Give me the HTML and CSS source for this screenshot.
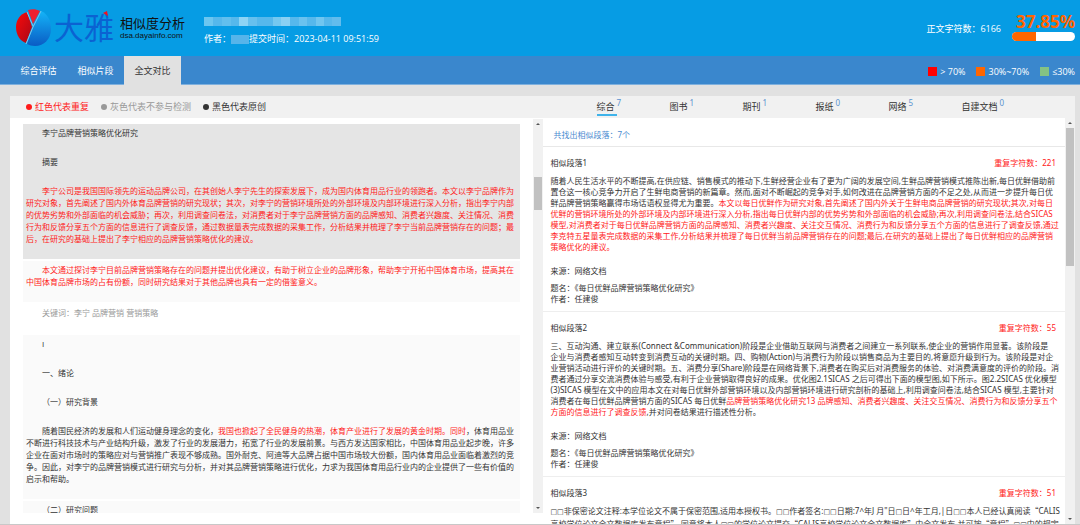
FILE: index.html
```html
<!DOCTYPE html>
<html lang="zh-CN">
<head>
  <meta charset="UTF-8">
  <title>大雅相似度分析</title>
  <link rel="stylesheet" href="styles.css">
</head>
<body>

  <header class="header">
    <div class="logo">
      <svg class="logo-pie" width="36" height="38" viewBox="0 0 36 38">
        <defs>
          <linearGradient id="blue" x1="0" y1="0" x2="0" y2="1">
            <stop offset="0" stop-color="#14b4f8"/>
            <stop offset="1" stop-color="#0a5cc4"/>
          </linearGradient>
          <linearGradient id="red" x1="0" y1="0" x2="1" y2="1">
            <stop offset="0" stop-color="#fa0a0a"/>
            <stop offset="1" stop-color="#a80818"/>
          </linearGradient>
        </defs>
        <path d="M17 18 L25 2 C32 5 35 12 35 20 C35 30 28 37 19 37 C16 37 13 36 11 35 Z" fill="url(#blue)"/>
        <path d="M16 18 L10 34 C4 32 0 26 0 18 C0 11 4 5 11 3 Z" fill="url(#red)"/>
        <path d="M17 15 L12 1 C16 0 20 0 24 2 Z" fill="#ee2030"/>
        <path d="M25 2 L17 18 L10 35 M11 3 L17 17" fill="none" stroke="#7cc8ee" stroke-width="1"/>
      </svg>
      <div class="logo-name">大雅
        <svg class="logo-mark" width="6" height="6" viewBox="0 0 6 6"><path d="M0 2 L4 0 L5 5 Z" fill="#f01020"/></svg>
      </div>
      <div class="logo-sub">
        <div class="logo-title">相似度分析</div>
        <div class="logo-url">dsa.dayainfo.com</div>
      </div>
    </div>

    <div class="paper">
      <svg class="paper-title" width="137" height="9" viewBox="0 0 137 9">
        <rect width="137" height="9" fill="#56b8ec"/>
        <rect width="9" height="9" fill="#6cc6f0"/>
        <rect x="18" width="9" height="9" fill="#62bfee"/>
        <rect x="35" width="9" height="9" fill="#8ed4f5"/>
        <rect x="44" width="9" height="9" fill="#66c0ee"/>
        <rect x="69" width="8" height="9" fill="#74c8f0"/>
        <rect x="77" width="9" height="9" fill="#8ad0f3"/>
        <rect x="95" width="8" height="9" fill="#6ac2ef"/>
        <rect x="112" width="8" height="9" fill="#70c6f0"/>
        <rect x="128" width="9" height="9" fill="#62bced"/>
      </svg>
      <div class="paper-info">
        <span>作者：</span>
        <svg width="18" height="9" viewBox="0 0 18 9"><rect width="18" height="9" fill="#56b4ea"/></svg>
        <span>提交时间：2023-04-11 09:51:59</span>
      </div>
    </div>

    <div class="total">
      <span class="total-chars">正文字符数：6166</span>
      <div class="rate">
        <div class="rate-num">37.85%</div>
        <div class="rate-bar"><div class="rate-fill" style="width: 37.85%"></div></div>
      </div>
    </div>
  </header>

  <nav class="nav">
    <a class="nav-link" href="#">综合评估</a>
    <a class="nav-link" href="#">相似片段</a>
    <a class="nav-link active" href="#">全文对比</a>
    <ul class="levels">
      <li><i class="box high"></i>&gt; 70%</li>
      <li><i class="box mid"></i>30%~70%</li>
      <li><i class="box low"></i>≤30%</li>
    </ul>
  </nav>

  <main class="main">
    <div class="toolbar">
      <ul class="legend">
        <li class="dup"><i class="dot"></i>红色代表重复</li>
        <li class="skip"><i class="dot"></i>灰色代表不参与检测</li>
        <li class="orig"><i class="dot"></i>黑色代表原创</li>
      </ul>
      <div class="types">
        <a class="type active" href="#">综合<sup>7</sup></a>
        <a class="type" href="#">图书<sup>1</sup></a>
        <a class="type" href="#">期刊<sup>1</sup></a>
        <a class="type" href="#">报纸<sup>0</sup></a>
        <a class="type" href="#">网络<sup>5</sup></a>
        <a class="type" href="#">自建文档<sup>0</sup></a>
      </div>
    </div>

    <div class="panels">
      <!-- full text -->
      <section class="panel source">
        <div class="scroll">
          <article class="block selected">
            <p>李宁品牌营销策略优化研究</p>
            <p>摘要</p>
            <p class="red">李宁公司是我国国际领先的运动品牌公司，在其创始人李宁先生的探索发展下，成为国内体育用品行业的领跑者。本文以李宁品牌作为研究对象，首先阐述了国内外体育品牌营销的研究现状；其次，对李宁的营销环境所处的外部环境及内部环境进行深入分析，指出李宁内部的优势劣势和外部面临的机会威胁；再次，利用调查问卷法，对消费者对于李宁品牌营销方面的品牌感知、消费者兴趣度、关注情况、消费行为和反馈分享五个方面的信息进行了调查反馈，通过数据量表完成数据的采集工作，分析结果并梳理了李宁当前品牌营销存在的问题；最后，在研究的基础上提出了李宁相应的品牌营销策略优化的建议。</p>
          </article>
          <article class="block">
            <p class="red">本文通过探讨李宁目前品牌营销策略存在的问题并提出优化建议，有助于树立企业的品牌形象，帮助李宁开拓中国体育市场，提高其在中国体育品牌市场的占有份额，同时研究结果对于其他品牌也具有一定的借鉴意义。</p>
          </article>
          <article class="block plain">
            <p class="gray">关键词：李宁 品牌营销 营销策略</p>
          </article>
          <article class="block">
            <p>I</p>
            <p>一、绪论</p>
            <p>（一）研究背景</p>
            <p>随着国民经济的发展和人们运动健身理念的变化，<span class="red">我国也掀起了全民健身的热潮，体育产业进行了发展的黄金时期。同时</span>，体育用品业不断进行科技技术与产业结构升级，激发了行业的发展潜力，拓宽了行业的发展前景。与西方发达国家相比，中国体育用品业起步晚，许多企业在面对市场时的策略应对与营销推广表现不够成熟。国外耐克、阿迪等大品牌占据中国市场较大份额，国内体育用品业面临着激烈的竞争。因此，对李宁的品牌营销模式进行研究与分析，并对其品牌营销策略进行优化，力求为我国体育用品行业内的企业提供了一些有价值的启示和帮助。</p>
          </article>
          <article class="block">
            <p>（二）研究问题</p>
          </article>
        </div>
        <div class="bar"><i class="arrow up"></i><i class="thumb"></i><i class="arrow down"></i></div>
      </section>

      <!-- similar paragraphs -->
      <section class="panel result">
        <div class="scroll">
          <div class="count">共找出相似段落：7个</div>

          <article class="item">
            <div class="item-head"><h3>相似段落1</h3><span class="red">重复字符数：221</span></div>
            <p class="item-text">随着人民生活水平的不断提高,在供应链、销售模式的推动下,生鲜经营企业有了更为广阔的发展空间,生鲜品牌营销模式推陈出新,每日优鲜借助前<br>置仓这一核心竞争力开启了生鲜电商营销的新篇章。然而,面对不断崛起的竞争对手,如何改进在品牌营销方面的不足之处,从而进一步提升每日优<br>鲜品牌营销策略赢得市场话语权显得尤为重要。<span class="red">本文以每日优鲜作为研究对象,首先阐述了国内外关于生鲜电商品牌营销的研究现状;其次,对每日<br>优鲜的营销环境所处的外部环境及内部环境进行深入分析,指出每日优鲜内部的优势劣势和外部面临的机会威胁;再次,利用调查问卷法,结合SICAS<br>模型,对消费者对于每日优鲜品牌营销方面的品牌感知、消费者兴趣度、关注交互情况、消费行为和反馈分享五个方面的信息进行了调查反馈,通过<br>李克特五星量表完成数据的采集工作,分析结果并梳理了每日优鲜当前品牌营销存在的问题;最后,在研究的基础上提出了每日优鲜相应的品牌营销<br>策略优化的建议。</span></p>
            <p class="from">来源：网络文档</p>
            <p class="meta">题名：《每日优鲜品牌营销策略优化研究》<br>作者：任建俊</p>
          </article>

          <article class="item">
            <div class="item-head"><h3>相似段落2</h3><span class="red">重复字符数：55</span></div>
            <p class="item-text">三、互动沟通、建立联系(Connect &amp;Communication)阶段是企业借助互联网与消费者之间建立一系列联系,使企业的营销作用显著。该阶段是<br>企业与消费者感知互动转变到消费互动的关键时期。四、购物(Action)与消费行为阶段以销售商品为主要目的,将意愿升级到行为。该阶段是对企<br>业营销活动进行评价的关键时期。五、消费分享(Share)阶段是在网络背景下,消费者在购买后对消费服务的体验、对消费满意度的评价的阶段。消<br>费者通过分享交流消费体验与感受,有利于企业营销取得良好的成果。优化图2.1SICAS 之后可得出下面的模型图,如下所示。图2.2SICAS 优化模型<br>(3)SICAS 模型在文中的应用本文在对每日优鲜外部营销环境以及内部营销环境进行研究剖析的基础上,利用调查问卷法,结合SICAS 模型,主要针对<br>消费者在每日优鲜品牌营销方面的SICAS 每日优鲜<span class="red">品牌营销策略优化研究13 品牌感知、消费者兴趣度、关注交互情况、消费行为和反馈分享五个<br>方面的信息进行了调查反馈</span>,并对问卷结果进行描述性分析。</p>
            <p class="from">来源：网络文档</p>
            <p class="meta">题名：《每日优鲜品牌营销策略优化研究》<br>作者：任建俊</p>
          </article>

          <article class="item">
            <div class="item-head"><h3>相似段落3</h3><span class="red">重复字符数：51</span></div>
            <p class="item-text"><span class="blank">□□</span>非保密论文注释:本学位论文不属于保密范围,适用本授权书。<span class="blank">□□</span>作者签名:<span class="blank">□□</span>日期:7^年J 月"日<span class="blank">□</span>日^年工月,|日<span class="blank">□□</span>本人已经认真阅读<span class="quote">“</span>CALIS<br>高校学位论文全文数据库发布章程<span class="quote">”</span>,同意将本人<span class="blank">□□</span>的学位论文提交<span class="quote">“</span>CALIS高校学位论文全文数据库<span class="quote">”</span>中全文发布,并可按<span class="quote">“</span>章程<span class="quote">”</span><span class="blank">□□</span>中的规定</p>
          </article>
        </div>
        <div class="bar"><i class="arrow up"></i><i class="thumb"></i><i class="arrow down"></i></div>
      </section>
    </div>
  </main>

</body>
</html>
```
FILE: styles.css
```css
* {
  box-sizing: border-box;
}

body {
  margin: 0;
  height: 100vh;
  display: flex;
  flex-direction: column;
  overflow: hidden;
  font-family: "Open Sans", "Noto Sans CJK SC", sans-serif;
  font-size: 9px;
  line-height: 12px;
  color: #333;
  background-color: #e1e1e1;
  border-bottom: 1px solid #c8c8c8;
}

ul, p, h3 {
  margin: 0;
  padding: 0;
  list-style: none;
  font-weight: normal;
}

a {
  color: inherit;
  text-decoration: none;
}

svg {
  display: block;
}

/* header */
.header {
  flex: none;
  display: flex;
  height: 56px;
  padding: 0 5px 0 16px;
  background-color: #069ce4;
  color: #fff;
}

.logo {
  display: flex;
  align-items: center;
  width: 188px;
}

.logo-name {
  position: relative;
  margin-left: 2px;
  font-size: 30px;
  line-height: 38px;
  color: #0b62d2;
}

.logo-mark {
  position: absolute;
  right: 5px;
  top: 2px;
}

.logo-sub {
  margin-left: 6px;
  color: #111;
}

.logo-title {
  font-size: 13px;
  line-height: 16px;
}

.logo-url {
  font-family: "Liberation Sans", Arial, sans-serif;
  font-size: 8px;
  line-height: 10px;
}

.paper {
  padding-top: 17px;
}

.paper-info {
  display: flex;
  align-items: center;
  margin-top: 7px;
}

.total {
  display: flex;
  margin-left: auto;
}

.total-chars {
  margin: 23px 11px 0 0;
}

.rate {
  width: 63px;
}

.rate-num {
  margin-top: 12px;
  font-size: 17px;
  line-height: 20px;
  font-weight: bold;
  text-align: right;
  color: #ff6600;
}

.rate-bar {
  height: 9px;
  border-radius: 5px;
  overflow: hidden;
  background-color: #fff;
}

.rate-fill {
  height: 100%;
  background-color: #ff6600;
}

/* navigation */
.nav {
  flex: none;
  display: flex;
  height: 29px;
  padding: 0 5px 0 10px;
  background-color: #3a87cd;
  border-bottom: 1px solid #7fb0dd;
  color: #fff;
}

.nav-link {
  width: 57px;
  height: 29px;
  line-height: 30px;
  text-align: center;
}

.nav-link.active {
  background-color: #e1e1e1;
  color: #333;
}

.levels {
  display: flex;
  align-items: center;
  gap: 11px;
  margin-left: auto;
  padding-top: 3px;
}

.levels li {
  display: flex;
  align-items: center;
  gap: 3px;
}

.box {
  width: 9px;
  height: 9px;
}

.high {
  background-color: #ff0000;
}

.mid {
  background-color: #ff6600;
}

.low {
  background-color: #84c284;
}

/* content */
.main {
  flex: 1;
  min-height: 0;
  display: flex;
  flex-direction: column;
  padding: 11px 5px 0 10px;
}

.toolbar {
  flex: none;
  display: grid;
  grid-template-columns: 1fr 1fr;
  height: 22px;
  background-color: #f1f1f1;
}

.legend {
  display: flex;
  align-items: center;
  gap: 12px;
  padding-left: 16px;
}

.legend li {
  display: flex;
  align-items: center;
  gap: 3px;
}

.dot {
  width: 6px;
  height: 6px;
  border-radius: 50%;
  background-color: currentColor;
}

.dup, .red {
  color: #ff1a1a;
}

.skip, .gray {
  color: #999;
}

.types {
  display: flex;
  padding-left: 54px;
}

.type {
  position: relative;
  width: 73px;
  line-height: 22px;
  white-space: nowrap;
}

.type sup {
  margin-left: 2px;
  font-family: "Noto Sans", sans-serif;
  font-size: 8px;
  line-height: 8px;
  color: #5a93d0;
}

.type.active::after {
  content: "";
  position: absolute;
  left: 0;
  bottom: 2px;
  width: 20px;
  height: 2px;
  background-color: #3fb3ea;
}

.panels {
  flex: 1;
  min-height: 0;
  display: grid;
  grid-template-columns: 1fr 1fr;
  background-color: #fff;
}

.panel {
  display: flex;
  min-width: 0;
  min-height: 0;
  font-size: 8px;
}

.scroll {
  flex: 1;
  min-width: 0;
  overflow: hidden;
}

.source {
  padding: 1px 0 11px;
}

.source .scroll {
  padding: 5px 13px 0;
}

.block {
  margin-bottom: 2px;
  padding: 3px 3px 14px;
  background-color: #fafafa;
}

.block p {
  text-indent: 16px;
}

.block p + p {
  margin-top: 17px;
}

.block.selected {
  background-color: #e5e5e5;
}

.block.plain {
  background-color: #fff;
}

/* scroll bars */
.bar {
  flex: none;
  display: flex;
  flex-direction: column;
  align-items: center;
  width: 10px;
  padding: 4px 0;
  background-color: #f1f1f1;
}

.arrow {
  border: 2px solid transparent;
}

.arrow.up {
  border-top: 0;
  border-bottom-color: #555;
}

.arrow.down {
  margin-top: auto;
  border-bottom: 0;
  border-top-color: #555;
}

.thumb {
  width: 8px;
  background-color: #c1c1c1;
}

.source .thumb {
  height: 33px;
  margin-top: 52px;
}

.result .thumb {
  height: 138px;
  margin-top: 4px;
}

.result {
  font-family: "Noto Sans", "Noto Sans CJK SC", sans-serif;
}

.count {
  padding: 11px 11px 5px;
  border-bottom: 1px solid #e8e8e8;
  color: #4a8bd0;
}

.item {
  padding: 10px 9px 7px 8px;
  border-bottom: 1px solid #eee;
}

.item-head {
  display: flex;
  justify-content: space-between;
}

.item-head h3 {
  font-size: 8px;
}

.item-text {
  margin-top: 6px;
  line-height: 11px;
  white-space: nowrap;
}

.from {
  margin-top: 13px;
}

.meta {
  margin-top: 5px;
  line-height: 11px;
}

.blank {
  font-family: "DejaVu Sans", sans-serif;
  font-size: 7px;
}

.quote {
  font-family: "Noto Sans CJK SC", sans-serif;
}
```
